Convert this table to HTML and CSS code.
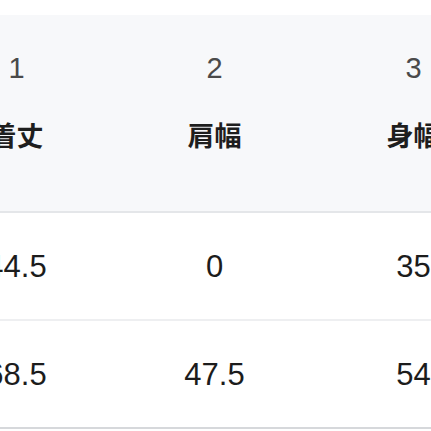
FILE: index.html
```
<!DOCTYPE html>
<html lang="ja">
<head>
<meta charset="utf-8">
<link rel="stylesheet" href="styles.css">
</head>
<body>
<div class="table">
  <div class="row head">
    <div class="cell"><span class="num">1</span><span class="label">着丈</span></div>
    <div class="cell"><span class="num">2</span><span class="label">肩幅</span></div>
    <div class="cell"><span class="num">3</span><span class="label">身幅</span></div>
  </div>
  <div class="row data">
    <div class="cell">44.5</div>
    <div class="cell">0</div>
    <div class="cell">35</div>
  </div>
  <div class="row data last">
    <div class="cell">68.5</div>
    <div class="cell">47.5</div>
    <div class="cell">54</div>
  </div>
</div>
</body>
</html>
```
FILE: styles.css
```
html, body {
  margin: 0;
  padding: 0;
  background: #ffffff;
  overflow: hidden;
  width: 431px;
  height: 431px;
}
.table {
  margin-top: 15px;
  margin-left: -82px;
  width: 700px;
  font-family: "Liberation Sans", Arial, "Noto Sans CJK JP", sans-serif;
}
.row {
  display: grid;
  grid-template-columns: 197px 199px 199px 105px;
}
.head {
  background: #f7f8fa;
  height: 196px;
  border-bottom: 2px solid #e4e6e9;
}
.head .cell {
  display: flex;
  flex-direction: column;
  align-items: center;
  padding-top: 38px;
  gap: 35px;
}
.num {
  font-size: 29px;
  line-height: 30px;
  color: #4a4a4a;
}
.label {
  font-family: "Noto Sans CJK JP", sans-serif;
  font-weight: 700;
  font-size: 27px;
  line-height: 34px;
  color: #1e1e1e;
}
.data {
  height: 106px;
  border-bottom: 2px solid #eeeff1;
}
.data .cell {
  display: flex;
  align-items: center;
  justify-content: center;
  font-size: 31px;
  color: #1c1c1c;
  padding-top: 1px;
}
.last {
  border-bottom: 2px solid #d6d8db;
}
```
